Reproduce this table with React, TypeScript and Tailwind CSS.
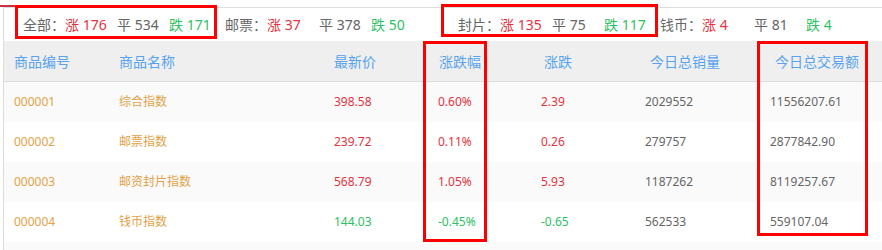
import React from 'react';

const RED = 'text-[#e5323e]';
const GREEN = 'text-[#2ebf62]';
const GRAY = 'text-[#666666]';

type Group = { label: string; up: number; flat: number; down: number };

const groupsLeft: Group[] = [
  { label: '全部', up: 176, flat: 534, down: 171 },
  { label: '邮票', up: 37, flat: 378, down: 50 },
];
const groupsRight: Group[] = [
  { label: '封片', up: 135, flat: 75, down: 117 },
  { label: '钱币', up: 4, flat: 81, down: 4 },
];

const rows = [
  { code: '000001', name: '综合指数', price: '398.58', pct: '0.60%', chg: '2.39', vol: '2029552', amt: '11556207.61', up: true },
  { code: '000002', name: '邮票指数', price: '239.72', pct: '0.11%', chg: '0.26', vol: '279757', amt: '2877842.90', up: true },
  { code: '000003', name: '邮资封片指数', price: '568.79', pct: '1.05%', chg: '5.93', vol: '1187262', amt: '8119257.67', up: true },
  { code: '000004', name: '钱币指数', price: '144.03', pct: '-0.45%', chg: '-0.65', vol: '562533', amt: '559107.04', up: false },
];

const StatGroup: React.FC<{ g: Group }> = ({ g }) => (
  <div className="flex items-center mr-[4px]">
    <span className={`w-[42px] ${GRAY}`}>{g.label}：</span>
    <span className={`w-[52px] ${RED}`}>涨 {g.up}</span>
    <span className={`w-[52px] ${GRAY}`}>平 {g.flat}</span>
    <span className={`w-[52px] ${GREEN}`}>跌 {g.down}</span>
  </div>
);

const cols = 'grid grid-cols-[105px_215px_104px_103px_104px_125px_122px]';

export default function App() {
  return (
    <div
      className="relative w-[882px] h-[250px] overflow-hidden bg-white"
      style={{ fontFamily: '"Noto Sans", "Noto Sans CJK SC", sans-serif' }}
    >
      <div className="ml-[3px] mt-[7px] border-l border-t border-[#dddddd]">
        {/* summary bar */}
        <div className="flex items-center h-[33px] text-[14px] pl-[19px]">
          <div className="flex w-[435px]">
            {groupsLeft.map((g) => (
              <StatGroup key={g.label} g={g} />
            ))}
          </div>
          <div className="flex">
            {groupsRight.map((g) => (
              <StatGroup key={g.label} g={g} />
            ))}
          </div>
        </div>

        {/* table header */}
        <div className={`${cols} h-[41px] items-center bg-[#efefef] border-b border-[#dcdcdc] text-[14px] text-[#58a3ee]`}>
          <div className="pl-[10px]">商品编号</div>
          <div className="pl-[10px]">商品名称</div>
          <div className="pl-[10px]">最新价</div>
          <div className="pl-[11px]">涨跌幅</div>
          <div className="pl-[13px]">涨跌</div>
          <div className="pl-[15px]">今日总销量</div>
          <div className="pl-[15px]">今日总交易额</div>
        </div>

        {/* table body */}
        {rows.map((r, i) => {
          const c = r.up ? RED : GREEN;
          return (
            <div
              key={r.code}
              className={`${cols} h-[40px] items-center text-[12px] ${i % 2 === 0 ? 'bg-[#fafafa]' : 'bg-white'}`}
            >
              <div className="pl-[10px] text-[#e2a246]">{r.code}</div>
              <div className="pl-[10px] text-[#e2a246]">{r.name}</div>
              <div className={`pl-[10px] ${c}`}>{r.price}</div>
              <div className={`pl-[10px] ${c}`}>{r.pct}</div>
              <div className={`pl-[10px] ${c}`}>{r.chg}</div>
              <div className={`pl-[10px] ${GRAY}`}>{r.vol}</div>
              <div className={`pl-[10px] ${GRAY}`}>{r.amt}</div>
            </div>
          );
        })}
        <div className="h-[20px] bg-[#fafafa]" />
      </div>

      {/* annotation marks */}
      <div className="absolute left-0 top-[5px] w-[15px] h-[2px] bg-[#c9323a]" />
      <div className="absolute left-[15px] top-[5px] w-[202px] h-[34px] border-[3px] border-[#ff0000]" />
      <div className="absolute left-[441px] top-[4px] w-[217px] h-[33px] border-[3px] border-[#ff0000]" />
      <div className="absolute left-[423px] top-[41px] w-[64px] h-[201px] border-[3px] border-[#ff0000]" />
      <div className="absolute left-[757px] top-[41px] w-[111px] h-[195px] border-[3px] border-[#ff0000]" />
    </div>
  );
}
